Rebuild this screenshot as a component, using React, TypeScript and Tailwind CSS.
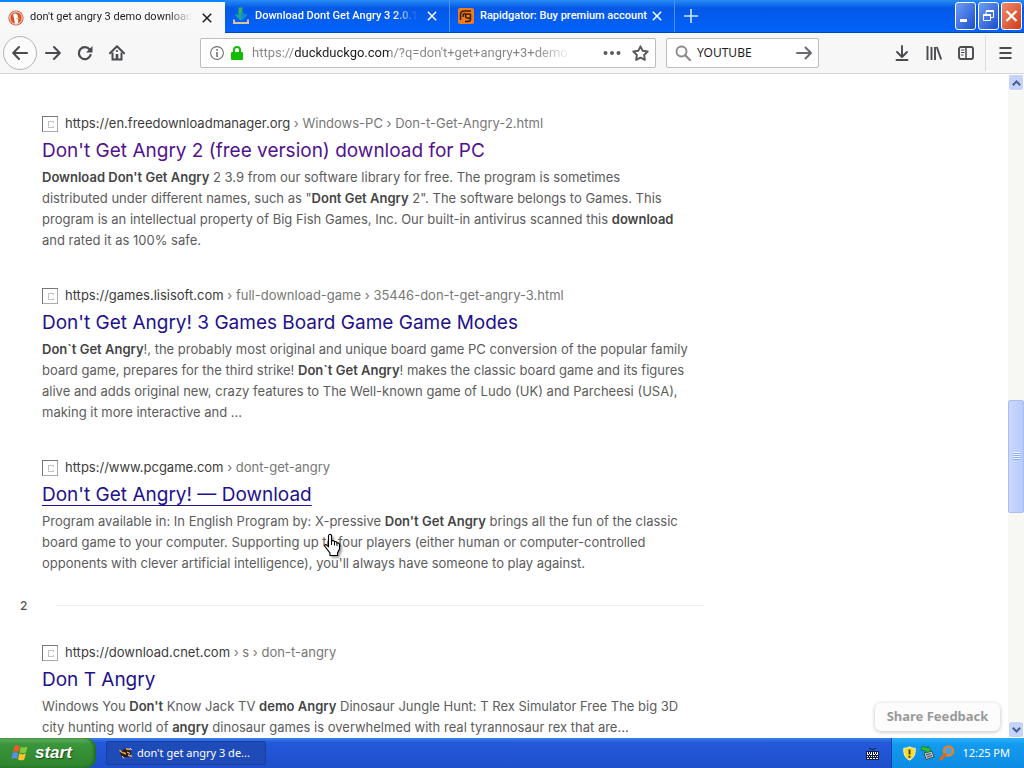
import React, { useState } from "react";
import clsx from "clsx";

type Result = {
  host: string;
  path: string;
  title: string;
  visited?: boolean;
  hovered?: boolean;
  // one entry per line, text between asterisks is bold
  lines: string[];
};

const results: Result[] = [
  {
    host: "https://en.freedownloadmanager.org",
    path: " › Windows-PC › Don-t-Get-Angry-2.html",
    title: "Don't Get Angry 2 (free version) download for PC",
    visited: true,
    lines: [
      "*Download Don't Get Angry* 2 3.9 from our software library for free. The program is sometimes",
      'distributed under different names, such as "*Dont Get Angry* 2". The software belongs to Games. This',
      "program is an intellectual property of Big Fish Games, Inc. Our built-in antivirus scanned this *download*",
      "and rated it as 100% safe.",
    ],
  },
  {
    host: "https://games.lisisoft.com",
    path: " › full-download-game › 35446-don-t-get-angry-3.html",
    title: "Don't Get Angry! 3 Games Board Game Game Modes",
    lines: [
      "*Don`t Get Angry*!, the probably most original and unique board game PC conversion of the popular family",
      "board game, prepares for the third strike! *Don`t Get Angry*! makes the classic board game and its figures",
      "alive and adds original new, crazy features to The Well-known game of Ludo (UK) and Parcheesi (USA),",
      "making it more interactive and ...",
    ],
  },
  {
    host: "https://www.pcgame.com",
    path: " › dont-get-angry",
    title: "Don't Get Angry! — Download",
    hovered: true,
    lines: [
      "Program available in: In English Program by: X-pressive *Don't Get Angry* brings all the fun of the classic",
      "board game to your computer. Supporting up to four players (either human or computer-controlled",
      "opponents with clever artificial intelligence), you'll always have someone to play against.",
    ],
  },
];

const nextPage: Result[] = [
  {
    host: "https://download.cnet.com",
    path: " › s › don-t-angry",
    title: "Don T Angry",
    lines: [
      "Windows You *Don't* Know Jack TV *demo Angry* Dinosaur Jungle Hunt: T Rex Simulator Free The big 3D",
      "city hunting world of *angry* dinosaur games is overwhelmed with real tyrannosaur rex that are...",
    ],
  },
];

function Snippet({ line }: { line: string }) {
  return (
    <span className="block">
      {line.split("*").map((part, i) =>
        i % 2 === 1 ? (
          <b key={i} className="font-semibold text-[#454545]">{part}</b>
        ) : (
          part
        )
      )}
    </span>
  );
}

function ResultItem({ item }: { item: Result }) {
  return (
    <article>
      <div className="flex items-center gap-[7px] h-5 text-[13px] whitespace-nowrap">
        <svg width="16" height="16" viewBox="0 0 16 16" fill="none" shapeRendering="crispEdges">
          <path d="M0.5 15.5V0.5H15.5" stroke="#777" />
          <path d="M15.5 0.5V15.5H0.5" stroke="#aaa" />
          <path d="M12 5.5H6.5V11.5H12M11.5 5V7M11.5 10V12" stroke="#c4c4c4" />
        </svg>
        <a href="#" className="text-[#777]">
          <span className="text-[#3c3c3c]">{item.host}</span>
          {item.path}
        </a>
      </div>
      <h2 className="h-[33px] leading-[33px] text-[19px] whitespace-nowrap">
        <a
          href="#"
          className={clsx(
            item.visited ? "text-[#52118f]" : "text-[#22108c]",
            item.hovered && "underline decoration-1 underline-offset-4"
          )}
        >
          {item.title}
        </a>
      </h2>
      <p className="text-[13px] leading-[21px] text-[#5c5c5c] whitespace-nowrap">
        {item.lines.map((l) => (
          <Snippet key={l} line={l} />
        ))}
      </p>
    </article>
  );
}

function CloseX({ className }: { className?: string }) {
  return (
    <svg width="10" height="10" viewBox="0 0 10 10" className={className}>
      <path d="M0.8 0.8L9.2 9.2M9.2 0.8L0.8 9.2" stroke="currentColor" strokeWidth="1.5" />
    </svg>
  );
}

function DuckIcon() {
  return (
    <svg width="16" height="16" viewBox="0 0 16 16">
      <circle cx="8" cy="8" r="7.6" fill="#d5512f" />
      <circle cx="8" cy="8" r="6.2" fill="none" stroke="#fff" strokeWidth="0.9" />
      <path d="M5.2 4.2C6.5 2.8 9.6 3.2 9.9 6l.4 7.3c-1 .5-2.3.6-3.3.2L5.8 7.5C5.4 6 5.2 5.2 5.2 4.2Z" fill="#fff" />
      <path d="M8.2 8.2c1.2-.5 2.7-.5 3.400 0-.6.9-2 1.100-3.400.9Z" fill="#f0b030" />
    </svg>
  );
}

function ArrowDownIcon() {
  return (
    <svg width="16" height="18" viewBox="0 0 16 18">
      <path d="M1 12.500v3.500h14v-3.500" fill="none" stroke="#d8c39a" strokeWidth="2" />
      <path d="M8 14L1.500 7.500H6V4.500L8 6l2-2V7.500h4.500Z" fill="#17a5a0" />
      <path d="M5.500 0.500h4.500L8.500 6 5.500 7.500Z" fill="#35b45a" />
      <path d="M9.500 2.500L11 7.500h3.500L8 14Z" fill="#1687d0" />
    </svg>
  );
}

function RapidgatorIcon() {
  return (
    <svg width="16" height="16" viewBox="0 0 16 16">
      <rect width="16" height="16" rx="2" fill="#f07c1e" />
      <path d="M2.5 12V6.500Q2.500 3 6.500 3H13" fill="none" stroke="#3a1c08" strokeWidth="1.500" />
      <path d="M5 9V7.500Q5 5.500 7.500 5.500M12.500 6H9.500Q7.500 6 7.500 8T9.500 10H12.500V6V11Q12.500 13.500 9.500 13.500H7" fill="none" stroke="#3a1c08" strokeWidth="1.500" />
    </svg>
  );
}

const tabs = [
  { title: "don't get angry 3 demo download", icon: <DuckIcon /> },
  { title: "Download Dont Get Angry 3 2.0.1", icon: <ArrowDownIcon /> },
  { title: "Rapidgator: Buy premium account", icon: <RapidgatorIcon /> },
];

function TitleBar() {
  const [active, setActive] = useState(0);

  return (
    <header className="flex h-[33px] shrink-0 bg-linear-to-b from-[#2a8bf5] from-0% via-[#0458e6] via-25% to-[#0262fb] border-b border-[#0347b5]">
      <div role="tablist" className="flex min-w-0">
        {tabs.map((tab, i) => (
          <div
            key={tab.title}
            className={clsx(
              "flex items-center w-[225px] min-w-0 pl-2 text-[11px]",
              i === active
                ? "h-[33px] pr-[13px] bg-[#f8f8f8] text-[#1c1c1c] border-t-2 border-[#0a84ff]"
                : "pr-3 text-white font-medium border-r border-[#4a93f5]"
            )}
          >
            <button
              role="tab"
              aria-selected={i === active}
              onClick={() => setActive(i)}
              className="flex flex-1 min-w-0 items-center gap-[6px] text-left font-['Roboto',sans-serif]"
            >
              <span className="shrink-0">{tab.icon}</span>
              <span className={clsx("flex-1 whitespace-nowrap", i < 2 && "mask-r-from-85%")}>
                {tab.title}
              </span>
            </button>
            <button aria-label="Close tab" className="ml-[10px]">
              <CloseX />
            </button>
          </div>
        ))}
      </div>
      <button aria-label="New tab" className="px-[9px] text-[#cfe6ff]">
        <svg width="14" height="14" viewBox="0 0 14 14">
          <path d="M7 0V14M0 7H14" stroke="currentColor" strokeWidth="1.6" />
        </svg>
      </button>
      <div className="ml-auto mr-[2px] flex items-start gap-[2px] pt-[2px] text-white">
        <button aria-label="Minimize" className="h-7 w-[21px] rounded-[3px] border border-white bg-linear-to-br from-[#6f9bf2] to-[#1b4cd0]">
          <svg width="19" height="26" viewBox="0 0 19 26">
            <path d="M4 17.5H11" stroke="currentColor" strokeWidth="3" />
          </svg>
        </button>
        <button aria-label="Restore" className="h-7 w-[21px] rounded-[3px] border border-white bg-linear-to-br from-[#6f9bf2] to-[#1b4cd0]">
          <svg width="19" height="26" viewBox="0 0 19 26" fill="none" stroke="currentColor">
            <path d="M7 11V8.5H14.5V14.5H12" />
            <path d="M7 8H15" strokeWidth="2" />
            <path d="M4.5 11.5H11.5V17.5H4.5Z" />
            <path d="M4 12H12" strokeWidth="2" />
          </svg>
        </button>
        <button aria-label="Close" className="h-7 w-[21px] rounded-[3px] border border-white bg-linear-to-br from-[#ee8a6c] to-[#cf3a10]">
          <svg width="19" height="26" viewBox="0 0 19 26">
            <path d="M4.5 8L14.5 18M14.5 8L4.5 18" stroke="currentColor" strokeWidth="2.2" />
          </svg>
        </button>
      </div>
    </header>
  );
}

function Toolbar() {
  const [search, setSearch] = useState("YOUTUBE");

  return (
    <nav className="flex items-center h-[41px] shrink-0 bg-[#f7f7f8] border-b border-[#d4d4d6] text-[#4a4a4f]">
      <div className="flex items-center pl-[3px]">
        <button aria-label="Back" className="flex items-center justify-center size-[34px] rounded-full border border-[#b5b5b7] bg-[#fbfbfb]">
          <svg width="16" height="16" viewBox="0 0 16 16" fill="none" stroke="currentColor" strokeWidth="2" strokeLinecap="round" strokeLinejoin="round">
            <path d="M15 8H1.5M7 2L1.2 8L7 14" />
          </svg>
        </button>
        <button aria-label="Forward" className="flex items-center justify-center w-8">
          <svg width="16" height="16" viewBox="0 0 16 16" fill="none" stroke="currentColor" strokeWidth="2" strokeLinecap="round" strokeLinejoin="round">
            <path d="M1 8H14.5M9 2L14.8 8L9 14" />
          </svg>
        </button>
        <button aria-label="Reload" className="flex items-center justify-center w-8">
          <svg width="16" height="16" viewBox="0 0 16 16" fill="none">
            <path d="M12.6 4.4A6 6 0 1 0 13.6 10" stroke="currentColor" strokeWidth="2.2" strokeLinecap="round" />
            <path d="M15.5 1V7.5H9Z" fill="currentColor" />
          </svg>
        </button>
        <button aria-label="Home" className="flex items-center justify-center w-8">
          <svg width="16" height="16" viewBox="0 0 16 16" fill="none" stroke="currentColor">
            <path d="M1 8.2L8 1.3L15 8.2" strokeWidth="2" strokeLinecap="round" strokeLinejoin="round" />
            <path d="M3.5 7.5V14.5H12.5V7.5" strokeWidth="2" />
            <path d="M8 9V14" strokeWidth="2.6" />
            <path d="M8 5V7" strokeWidth="1.6" />
          </svg>
        </button>
      </div>
      <div className="flex-[67]" />
      <div className="flex items-center flex-[439] min-w-0 h-[30px] bg-white border border-[#bdbdbf] rounded-[2px] pl-[9px] pr-[6px]">
        <svg width="14" height="14" viewBox="0 0 14 14" className="shrink-0">
          <circle cx="7" cy="7" r="6.4" fill="none" stroke="#737373" strokeWidth="1.1" />
          <path d="M7 6V11M7 3V4.8" stroke="#737373" strokeWidth="1.6" />
        </svg>
        <svg width="12" height="14" viewBox="0 0 12 14" className="ml-[7px] shrink-0">
          <path d="M3 7V4Q3 1 6 1T9 4V7" fill="none" stroke="#12bc00" strokeWidth="2" />
          <rect y="6" width="12" height="8" rx="1" fill="#12bc00" />
        </svg>
        <input
          type="text"
          aria-label="Address"
          readOnly
          value="https://duckduckgo.com/?q=don't+get+angry+3+demo"
          className="ml-[9px] w-[316px] min-w-0 font-['Roboto',sans-serif] text-[13px] outline-none text-transparent bg-clip-text bg-[linear-gradient(to_right,#858585_43px,#1c1c1c_43px,#1c1c1c_137px,#858585_137px,#858585_285px,#f4f4f4_316px)]"
        />
        <button aria-label="Page actions" className="ml-auto">
          <svg width="18" height="4" viewBox="0 0 18 4" fill="#5a5a5e">
            <circle cx="2.5" cy="2" r="2" />
            <circle cx="9" cy="2" r="2" />
            <circle cx="15.5" cy="2" r="2" />
          </svg>
        </button>
        <button aria-label="Bookmark this page" className="ml-[11px]">
          <svg width="17" height="16" viewBox="0 0 17 16">
            <path d="M8.5 1.3L10.7 5.8L15.7 6.5L12.1 10L12.9 14.9L8.5 12.6L4.1 14.9L4.9 10L1.3 6.5L6.3 5.8Z" fill="none" stroke="#5a5a5e" strokeWidth="1.9" strokeLinejoin="round" />
          </svg>
        </button>
      </div>
      <div className="flex items-center w-[153px] h-[30px] ml-[10px] bg-white border border-[#bdbdbf] rounded-[2px] pl-2 pr-[6px]">
        <svg width="16" height="16" viewBox="0 0 16 16" className="shrink-0">
          <circle cx="6.5" cy="6.5" r="5" fill="none" stroke="#8a8a8c" strokeWidth="1.9" />
          <path d="M10 10L15 15" stroke="#8a8a8c" strokeWidth="2.2" strokeLinecap="round" />
        </svg>
        <input
          type="text"
          aria-label="Search"
          value={search}
          onChange={(e) => setSearch(e.target.value)}
          className="ml-[6px] min-w-0 flex-1 text-[12px] text-[#1c1c1c] outline-none"
        />
        <button aria-label="Go">
          <svg width="16" height="14" viewBox="0 0 16 14" fill="none" stroke="#6a6a6e" strokeWidth="1.9" strokeLinecap="round" strokeLinejoin="round">
            <path d="M1 7H14.5M9.5 1.5L15 7L9.5 12.5" />
          </svg>
        </button>
      </div>
      <div className="flex-[67]" />
      <div className="flex items-center">
        <button aria-label="Downloads" className="flex justify-center w-8">
          <svg width="14" height="16" viewBox="0 0 14 16" fill="none" stroke="currentColor" strokeWidth="1.9" strokeLinecap="round" strokeLinejoin="round">
            <path d="M7 1V11.5M2 7L7 12L12 7M1.5 15H12.5" />
          </svg>
        </button>
        <button aria-label="Library" className="flex justify-center w-8">
          <svg width="16" height="14" viewBox="0 0 16 14" fill="none" stroke="currentColor" strokeWidth="1.9">
            <path d="M1.5 0V14M5.5 1V14M9 1V14M10.8 1L15.2 13.5" />
          </svg>
        </button>
        <button aria-label="Sidebars" className="flex justify-center w-8">
          <svg width="16" height="14" viewBox="0 0 16 14" fill="none" stroke="currentColor">
            <rect x="1" y="1" width="14" height="12" rx="2" strokeWidth="1.9" />
            <path d="M8 1V13" strokeWidth="1.5" />
            <path d="M3 4H6.5M3 6.5H6.5M3 9H5.5" />
          </svg>
        </button>
        <div className="ml-[3px] w-px h-9 bg-[#dcdcde]" />
        <button aria-label="Menu" className="flex justify-center w-[38px]">
          <svg width="13" height="12" viewBox="0 0 13 12" stroke="currentColor" strokeWidth="2">
            <path d="M0.5 1H12.5M0.5 6H12.5M0.5 11H12.5" />
          </svg>
        </button>
      </div>
    </nav>
  );
}

function ScrollBar() {
  return (
    <div className="flex flex-col w-4 shrink-0 bg-[#f7f7f4]">
      <button aria-label="Scroll up" className="flex items-center justify-center h-[17px] rounded-[3px] border border-white bg-[#c5d3fb]">
        <svg width="9" height="6" viewBox="0 0 9 6">
          <path d="M0.8 5.2L4.5 1.5L8.2 5.2" fill="none" stroke="#45618f" strokeWidth="2" />
        </svg>
      </button>
      <div className="flex-[310]" />
      <div className="flex flex-[111] items-center justify-center rounded-[2px] border border-[#a9bdf0] bg-linear-to-r from-[#cad8fd] to-[#b9cafa]">
        <svg width="7" height="8" viewBox="0 0 7 8">
          <path d="M0 0.5H7M0 2.5H7M0 4.5H7M0 6.5H7" stroke="#eef4fe" />
          <path d="M0 1.5H7M0 3.5H7M0 5.5H7M0 7.5H7" stroke="#8cb0f8" />
        </svg>
      </div>
      <div className="flex-[209]" />
      <button aria-label="Scroll down" className="flex items-center justify-center h-[17px] rounded-[3px] border border-white bg-[#c5d3fb]">
        <svg width="9" height="6" viewBox="0 0 9 6">
          <path d="M0.8 0.8L4.5 4.5L8.2 0.8" fill="none" stroke="#45618f" strokeWidth="2" />
        </svg>
      </button>
    </div>
  );
}

function HandCursor() {
  return (
    <svg width="20" height="24" viewBox="0 0 20 24" className="absolute left-[323px] top-[459px] drop-shadow-[2px_2px_1px_rgba(0,0,0,0.35)] pointer-events-none">
      <path
        d="M6.5 1.5Q8 1 8.5 2.5V8Q11 7 11.5 8.8Q13.5 8 14 10Q16.5 9.5 16.5 12V16L14.5 20V22.5H7V20L2 13.5Q1 11.5 3 11.5L5.5 13.5V3Q5.5 1.8 6.5 1.5Z"
        fill="#fff"
        stroke="#000"
        strokeWidth="1.1"
      />
      <path d="M8.5 8V12M11.5 9V12.5M14 10V13" stroke="#000" />
    </svg>
  );
}

function WindowsFlag() {
  return (
    <svg width="18" height="18" viewBox="0 0 18 18">
      <path d="M3.5 2Q6 0.5 8.8 2.2L7.5 8Q4.8 6.5 2 8Z" fill="#f0592b" />
      <path d="M9.8 2.8Q12.5 4.2 16.5 2.5L15 8.5Q12 10 8.5 8.5Z" fill="#7fcb3c" />
      <path d="M1.8 9Q4.5 7.5 7.3 9.2L6 15Q3.5 13.2 0.5 14.8Z" fill="#5a8df0" />
      <path d="M8.3 9.6Q11.5 11.2 14.8 9.6L13.3 15.5Q10.5 17.2 7 15.5Z" fill="#fbc62c" />
    </svg>
  );
}

function TaskBar() {
  return (
    <footer className="flex items-stretch h-[30px] shrink-0 bg-linear-to-b from-[#3a80ee] via-[#2459da] via-15% to-[#1f4fcd] text-white">
      <button className="flex items-center gap-[6px] w-24 pl-[11px] rounded-r-[10px] bg-linear-to-b from-[#66b266] via-[#3a963a] via-20% to-[#2e832e] shadow-[inset_-2px_0_3px_#1d6a20] font-['Liberation_Sans',sans-serif] text-[17px] font-bold italic [text-shadow:1px_1px_1px_#1b4d1b]">
        <WindowsFlag />
        start
      </button>
      <button className="flex items-center gap-[4px] my-[3px] ml-[10px] w-40 pl-3 rounded-[2px] border border-[#1640a0] bg-[#1e4bb8] text-[11px] whitespace-nowrap">
        <svg width="14" height="14" viewBox="0 0 14 14">
          <path d="M1 7Q1 3 4 5Q5 1 8 4Q12 3 12 7T8 11L3 11Z" fill="#2b1a10" />
          <path d="M0.5 4L3.5 7M7 3L11 3.5M4 6.5L7 8M9 9L13 10.5" stroke="#f0a848" strokeWidth="1.5" />
          <path d="M3 10L5 12.500M8 6L11 7.500M11 2L12.500 4" stroke="#f2ece4" />
        </svg>
        don't get angry 3 de...
      </button>
      <div className="ml-auto flex items-center pr-3">
        <svg width="13" height="13" viewBox="0 0 13 13" shapeRendering="crispEdges">
          <path d="M3 1.500H5M5 2.500H8M8 1.500H10" fill="none" stroke="#10204a" />
          <rect y="4" width="13" height="9" fill="#10204a" />
          <path d="M1 5.500H12V6.500H1ZM1 9.500H12" stroke="#fff" strokeDasharray="1 1" />
          <path d="M1 7.500H12M1 11.500H12" stroke="#fff" strokeDasharray="2 1" />
        </svg>
      </div>
      <div className="flex items-center gap-1 pl-[11px] pr-[14px] border-l border-[#1042af] bg-linear-to-b from-[#2bb0f8] via-[#129bf0] via-20% to-[#0f8be4] text-[11px]">
        <svg width="13" height="15" viewBox="0 0 13 15">
          <path d="M6.5 0.8Q9 2.5 12.2 2.3Q13 11 6.5 14.2Q0 11 0.8 2.3Q4 2.5 6.5 0.8Z" fill="#f8dc28" stroke="#f5f0c0" />
          <path d="M6.5 3.5V8.5M6.5 9.8V11.8" stroke="#3a3a10" strokeWidth="1.8" />
        </svg>
        <svg width="15" height="16" viewBox="0 0 15 16">
          <path d="M4 8L12 6L14 12L6 14.5Z" fill="#b9c2c8" stroke="#34505c" />
          <path d="M6 10L11 8.5M7 12L12 10.5" stroke="#34505c" />
          <path d="M2 1L8 3V1L11 6L6 8V6L1 5Z" fill="#2fbe3a" stroke="#14731d" strokeWidth="0.7" />
        </svg>
        <svg width="16" height="16" viewBox="0 0 16 16">
          <circle cx="9.5" cy="6" r="4.6" fill="#3fa5ee" stroke="#f08018" strokeWidth="2.4" />
          <path d="M6 9.5L2 14" stroke="#e06a10" strokeWidth="3.2" strokeLinecap="round" />
        </svg>
        <span className="ml-[3px] whitespace-nowrap">12:25 PM</span>
      </div>
    </footer>
  );
}

export default function App() {
  return (
    <div className="flex flex-col h-screen overflow-hidden bg-white font-['Noto_Sans',sans-serif]">
      <TitleBar />
      <Toolbar />
      <div className="relative flex flex-1 min-h-0">
        <main className="flex-1 min-w-0 overflow-hidden pt-10 font-['Inter',sans-serif]">
          <section className="flex flex-col gap-[35px] pl-[42px]">
            {results.map((r) => (
              <ResultItem key={r.host} item={r} />
            ))}
          </section>
          <div className="flex items-center h-[21px] mt-[21px] mb-[27px] pl-5 max-w-[704px]">
            <span className="w-9 text-[12px] font-medium text-[#555]">2</span>
            <hr className="flex-1 border-[#ececec]" />
          </div>
          <section className="flex flex-col gap-[35px] pl-[42px]">
            {nextPage.map((r) => (
              <ResultItem key={r.host} item={r} />
            ))}
          </section>
        </main>
        <ScrollBar />
        <button className="absolute right-6 bottom-[7px] h-7 w-[125px] rounded-[6px] bg-[#fcfcfc] text-[13px] font-bold text-[#999] shadow-[0_1px_4px_rgba(0,0,0,0.25)]">
          Share Feedback
        </button>
        <HandCursor />
      </div>
      <TaskBar />
    </div>
  );
}
